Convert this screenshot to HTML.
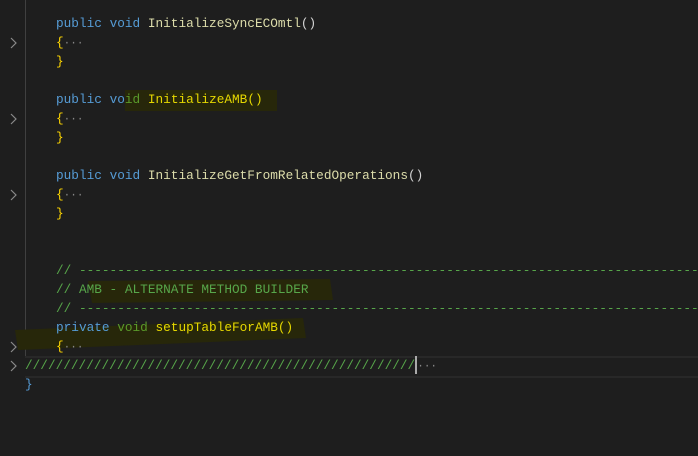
<!DOCTYPE html>
<html><head><style>
body{margin:0;width:698px;height:456px;background:#1e1e1e;overflow:hidden;position:relative;font-family:"Liberation Mono",monospace;font-size:12.75px}
.l{position:absolute;left:0;height:19px;line-height:19px;white-space:pre;color:#d4d4d4}
.k{color:#569cd6}.f{color:#dcdcaa}.b{color:#ffd700}.c{color:#57a64a}.g{color:#888;font-size:11px}
.hl{position:absolute;background:#27270a}
.clip{right:0;overflow:hidden}
</style></head><body>
<div style="position:absolute;left:25px;top:0;width:1px;height:356px;background:#404040"></div>
<div style="position:absolute;left:25px;right:0;top:356px;height:18px;border-top:2px solid #282828;border-bottom:2px solid #282828"></div>
<div class="hl" style="left:125px;top:90px;width:152px;height:21px"></div>
<svg style="position:absolute;left:0;top:0" width="698" height="456">
<polygon points="88,281 330,279 333,300 92,303" fill="#27270a"/>
<polygon points="15,330 303,318 306,338 18,350" fill="#27270a"/>
<g stroke="#8a8a8a" stroke-width="1.2" fill="none">
<path d="M11,38 L16,43 L11,48"/>
<path d="M11,114 L16,119 L11,124"/>
<path d="M11,190 L16,195 L11,200"/>
<path d="M11,342 L16,347 L11,352"/>
<path d="M11,361 L16,366 L11,371"/>
</g>
</svg>
<div class="l" style="top:14px;left:56px"><span class="k">public</span> <span class="k">void</span> <span class="f">InitializeSyncECOmtl</span>()</div>
<div class="l" style="top:33px;left:56px"><span class="b">{</span><span class="g">···</span></div>
<div class="l" style="top:52px;left:56px"><span class="b">}</span></div>
<div class="l" style="top:90px;left:56px"><span class="k">public</span> <span class="k">vo</span><span style="color:#5a9a2a">id</span> <span style="color:#e6d800">InitializeAMB()</span></div>
<div class="l" style="top:109px;left:56px"><span class="b">{</span><span class="g">···</span></div>
<div class="l" style="top:128px;left:56px"><span class="b">}</span></div>
<div class="l" style="top:166px;left:56px"><span class="k">public</span> <span class="k">void</span> <span class="f">InitializeGetFromRelatedOperations</span>()</div>
<div class="l" style="top:185px;left:56px"><span class="b">{</span><span class="g">···</span></div>
<div class="l" style="top:204px;left:56px"><span class="b">}</span></div>
<div class="l c clip" style="top:261px;left:56px">// ----------------------------------------------------------------------------------</div>
<div class="l c" style="top:280px;left:56px">// AMB - ALTERNATE METHOD BUILDER</div>
<div class="l c clip" style="top:299px;left:56px">// ----------------------------------------------------------------------------------</div>
<div class="l" style="top:318px;left:56px"><span class="k">private</span> <span style="color:#5a9a2a">void</span> <span style="color:#e6d800">setupTableForAMB()</span></div>
<div class="l" style="top:337px;left:56px"><span class="b">{</span><span class="g">···</span></div>
<div class="l c" style="top:356px;left:25px">///////////////////////////////////////////////////<span style="display:inline-block;width:2px;height:18px;background:#aaa;vertical-align:top"></span><span class="g">···</span></div>
<div class="l" style="top:375px;left:25px;color:#569cd6">}</div>
</body></html>
